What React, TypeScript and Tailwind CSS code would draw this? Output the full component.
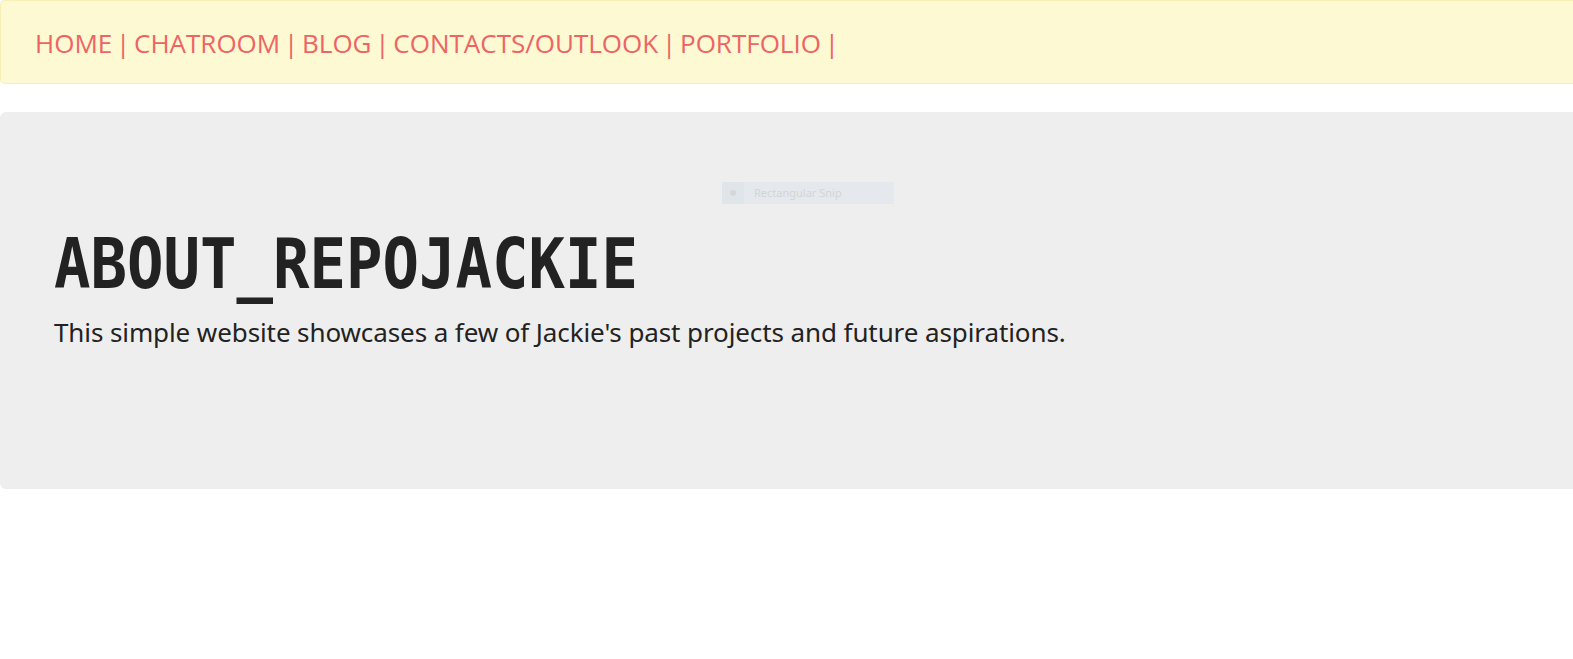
import React from 'react';

const links = ['HOME', 'CHATROOM', 'BLOG', 'CONTACTS/OUTLOOK', 'PORTFOLIO'];

const App: React.FC = () => {
  return (
    <div className="min-h-[659px] w-full overflow-hidden bg-white">
      {/* Navbar */}
      <nav className="h-[84px] rounded-l-[5px] border border-r-0 border-[#f7efb5] bg-[#fdf9d3] pl-[34px] flex items-center">
        <p className="pt-[2px] text-[26px] leading-none text-[#ee6464] font-['Open_Sans',sans-serif] [word-spacing:-3px]">
          {links.map((l) => (
            <span key={l}>{l} | </span>
          ))}
        </p>
      </nav>

      {/* Jumbotron */}
      <section className="relative mt-[28px] h-[377px] rounded-l-[6px] bg-[#eeeeee] pl-[54px] pt-[117px]">
        {/* Snipping tool ghost */}
        <div className="absolute left-[722px] top-[70px] flex h-[22px] w-[172px] items-center bg-[#e5e9ed]">
          <div className="flex h-full w-[22px] items-center justify-center bg-[#e0e5ea]">
            <span className="h-[6px] w-[6px] rounded-full bg-[#d5d8db]" />
          </div>
          <span className="ml-[10px] text-[11px] text-[#d2d4d6] font-['Noto_Sans',sans-serif]">Rectangular Snip</span>
        </div>

        <h1 className="h-[70px] origin-left scale-x-[0.866] text-[70px] font-bold leading-none text-[#222222] font-['DejaVu_Sans_Mono',monospace] whitespace-nowrap">
          ABOUT_REPOJACKIE
        </h1>
        <p className="mt-[14px] text-[26px] leading-[39px] tracking-[-0.1px] text-[#222222] font-['Noto_Sans',sans-serif]">
          This simple website showcases a few of Jackie's past projects and future aspirations.
        </p>
      </section>
    </div>
  );
};

export default App;
